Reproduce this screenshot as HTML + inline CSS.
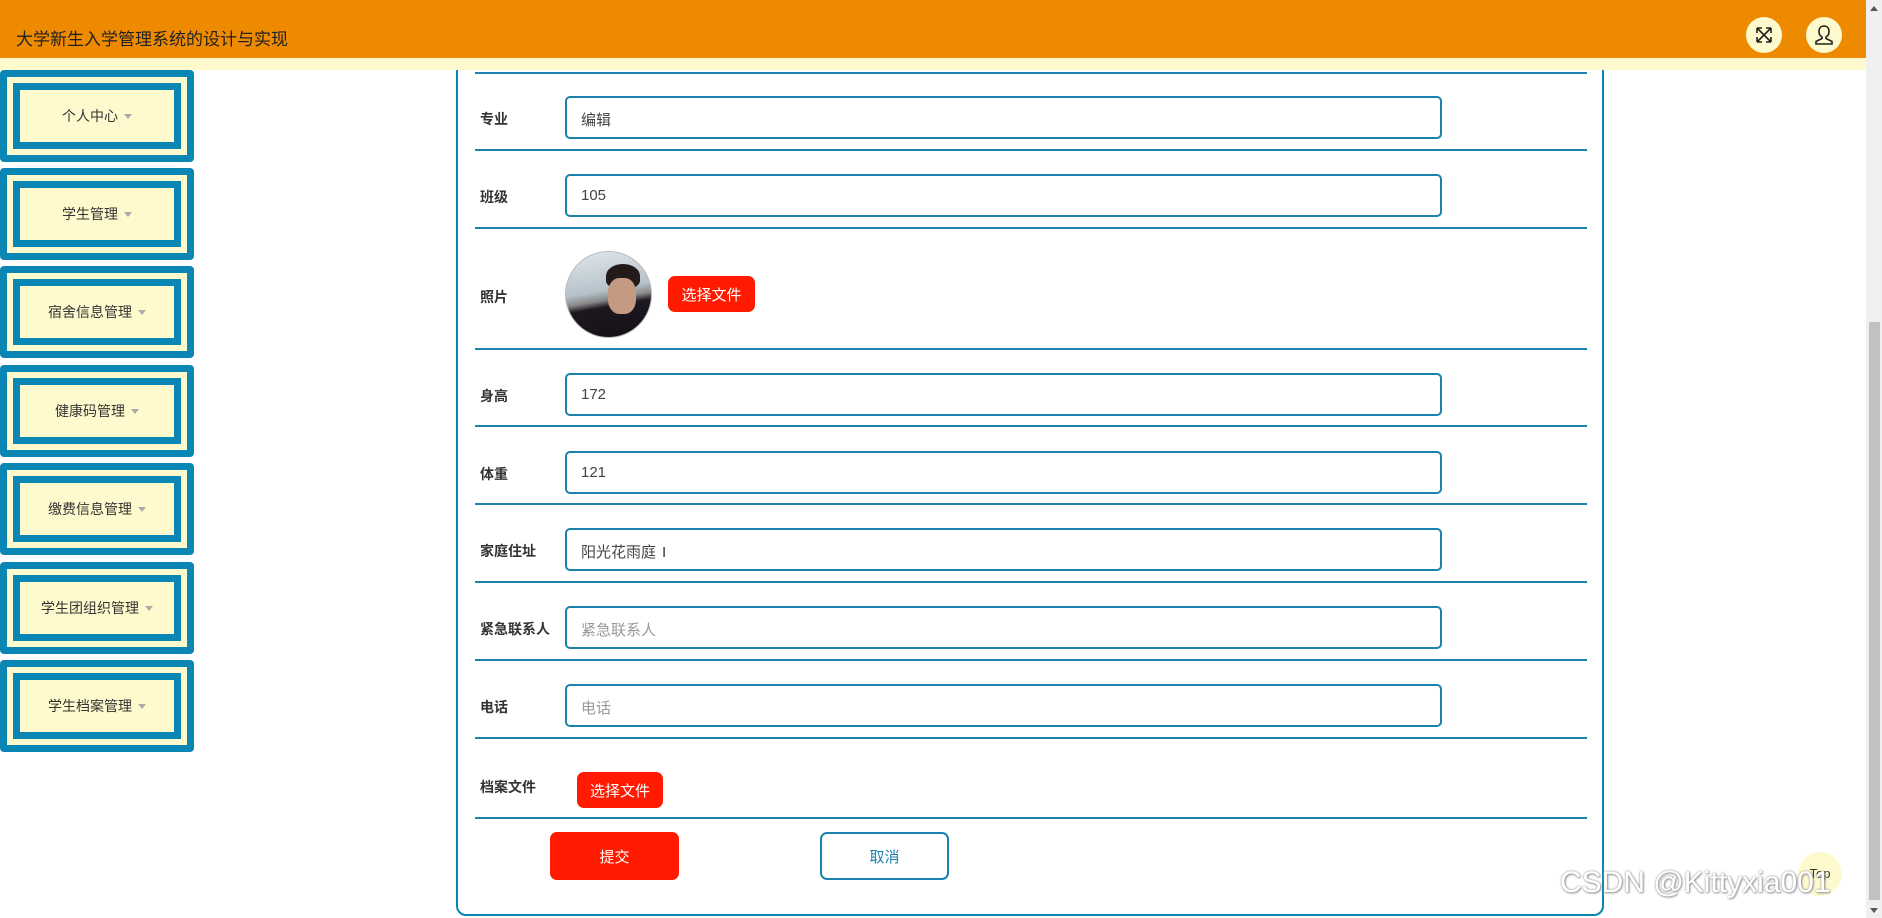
<!DOCTYPE html>
<html><head><meta charset="utf-8"><style>
*{box-sizing:border-box;margin:0;padding:0}
body{width:1882px;height:918px;overflow:hidden;background:#fff;position:relative;font-family:"Liberation Sans","Noto Sans CJK SC",sans-serif}
.hdr{position:absolute;left:0;top:0;width:1866px;height:58px;background:#ee8a00;z-index:5}
.hdr .t{position:absolute;left:16px;top:25px;font-size:17px;color:#222}
.strip{position:absolute;left:0;top:58px;width:1866px;height:12px;background:#fffacd;z-index:5}
.ic{position:absolute;top:17px;width:36px;height:36px;border-radius:50%;background:#fffacd}
.side{position:absolute;left:0;width:194px;height:92px;background:#0a86b4;border-radius:4px;padding:7px}
.side .a{width:100%;height:100%;background:#fffacd;padding:6px}
.side .b{width:100%;height:100%;background:#0a86b4;padding:7px}
.side .c{width:100%;height:100%;background:#fffacd;display:flex;align-items:center;justify-content:center;font-size:14px;color:#333}
.side .c:after{content:"";border:4px solid transparent;border-top:5px solid #aaa;margin:5px 0 0 6px}
.box{position:absolute;left:456px;top:30px;width:1148px;height:886px;border:2px solid #0a86b4;border-radius:10px}
.ln{position:absolute;left:475px;width:1112px;height:2px;background:#1b82ad}
.lb{position:absolute;left:480px;font-size:14px;font-weight:bold;color:#333}
.in{position:absolute;left:565px;width:877px;height:43px;border:2px solid #1b82ad;border-radius:5px;font-size:15px;color:#444;padding:11px 14px}
.ph{color:#999}
.btn{position:absolute;background:#ff1a00;color:#fff;border-radius:7px;font-size:15px;display:flex;align-items:center;justify-content:center}
.sb{position:absolute;left:1866px;top:0;width:16px;height:918px;background:#f0f0f0;z-index:6}
</style></head><body>
<div class="hdr"><div class="t">大学新生入学管理系统的设计与实现</div>
<div class="ic" style="left:1746px"><svg width="36" height="36" viewBox="0 0 36 36" fill="none" stroke="#222" stroke-width="1.6"><path d="M11 11L25 25M25 11L11 25M11 11h5M11 11v5M25 11h-5M25 11v5M11 25h5M11 25v-5M25 25h-5M25 25v-5"/></svg></div>
<div class="ic" style="left:1806px"><svg width="36" height="36" viewBox="0 0 36 36" fill="none" stroke="#222" stroke-width="1.6"><path d="M18 9c-3.5 0-5 2.5-5 5.5 0 2.5 1.3 4.5 3 5.5v1.5l-6 3v2.5h16v-2.5l-6-3V20c1.7-1 3-3 3-5.5C23 11.5 21.5 9 18 9z"/></svg></div>
</div>
<div class="strip"></div>
<div class="side" style="top:70px"><div class="a"><div class="b"><div class="c">个人中心</div></div></div></div>
<div class="side" style="top:168px"><div class="a"><div class="b"><div class="c">学生管理</div></div></div></div>
<div class="side" style="top:266px"><div class="a"><div class="b"><div class="c">宿舍信息管理</div></div></div></div>
<div class="side" style="top:365px"><div class="a"><div class="b"><div class="c">健康码管理</div></div></div></div>
<div class="side" style="top:463px"><div class="a"><div class="b"><div class="c">缴费信息管理</div></div></div></div>
<div class="side" style="top:562px"><div class="a"><div class="b"><div class="c">学生团组织管理</div></div></div></div>
<div class="side" style="top:660px"><div class="a"><div class="b"><div class="c">学生档案管理</div></div></div></div>

<div class="box"></div>
<div class="ln" style="top:72px"></div>
<div class="ln" style="top:149px"></div>
<div class="ln" style="top:227px"></div>
<div class="ln" style="top:348px"></div>
<div class="ln" style="top:425px"></div>
<div class="ln" style="top:503px"></div>
<div class="ln" style="top:581px"></div>
<div class="ln" style="top:659px"></div>
<div class="ln" style="top:737px"></div>
<div class="ln" style="top:817px"></div>

<div class="lb" style="top:109px">专业</div><div class="in" style="top:96px">编辑</div>
<div class="lb" style="top:187px">班级</div><div class="in" style="top:174px">105</div>
<div class="lb" style="top:287px">照片</div>
<div style="position:absolute;left:565px;top:251px;width:87px;height:87px;border-radius:50%;border:1px solid #bbb;overflow:hidden;background:linear-gradient(170deg,#e2e8ec 0%,#b5c2ca 45%,#888 55%,#1d1820 62%,#141018 100%)">
<div style="position:absolute;left:40px;top:12px;width:34px;height:24px;border-radius:50% 50% 30% 30%;background:#231a1c"></div>
<div style="position:absolute;left:42px;top:26px;width:28px;height:36px;border-radius:40%;background:#c49a82"></div>
</div>
<div class="btn" style="left:668px;top:276px;width:87px;height:36px">选择文件</div>
<div class="lb" style="top:386px">身高</div><div class="in" style="top:373px">172</div>
<div class="lb" style="top:464px">体重</div><div class="in" style="top:451px">121</div>
<div class="lb" style="top:541px">家庭住址</div><div class="in" style="top:528px">阳光花雨庭<span style="font-weight:normal;color:#333;margin-left:6px">I</span></div>
<div class="lb" style="top:619px">紧急联系人</div><div class="in ph" style="top:606px">紧急联系人</div>
<div class="lb" style="top:697px">电话</div><div class="in ph" style="top:684px">电话</div>
<div class="lb" style="top:777px">档案文件</div>
<div class="btn" style="left:577px;top:772px;width:86px;height:36px">选择文件</div>
<div class="btn" style="left:550px;top:832px;width:129px;height:48px">提交</div>
<div class="btn" style="left:820px;top:832px;width:129px;height:48px;background:#fff;border:2px solid #1b82ad;color:#1b82ad">取消</div>

<div style="position:absolute;left:1798px;top:852px;width:44px;height:44px;border-radius:50%;background:#fffacd;font-size:13px;color:#333;text-align:center;line-height:44px">Top</div>
<div style="position:absolute;left:1560px;top:866px;font-size:30px;color:#fff;text-shadow:0 0 2px #888,1px 1px 2px #999;white-space:nowrap;z-index:7">CSDN @Kittyxia001</div>
<div class="sb"><div style="position:absolute;left:3px;top:322px;width:11px;height:578px;background:#c1c1c1"></div>
<div style="position:absolute;left:4px;top:6px;border:4px solid transparent;border-bottom:5px solid #555;border-top:0"></div>
<div style="position:absolute;left:4px;top:908px;border:4px solid transparent;border-top:5px solid #555;border-bottom:0"></div></div>
</body></html>
